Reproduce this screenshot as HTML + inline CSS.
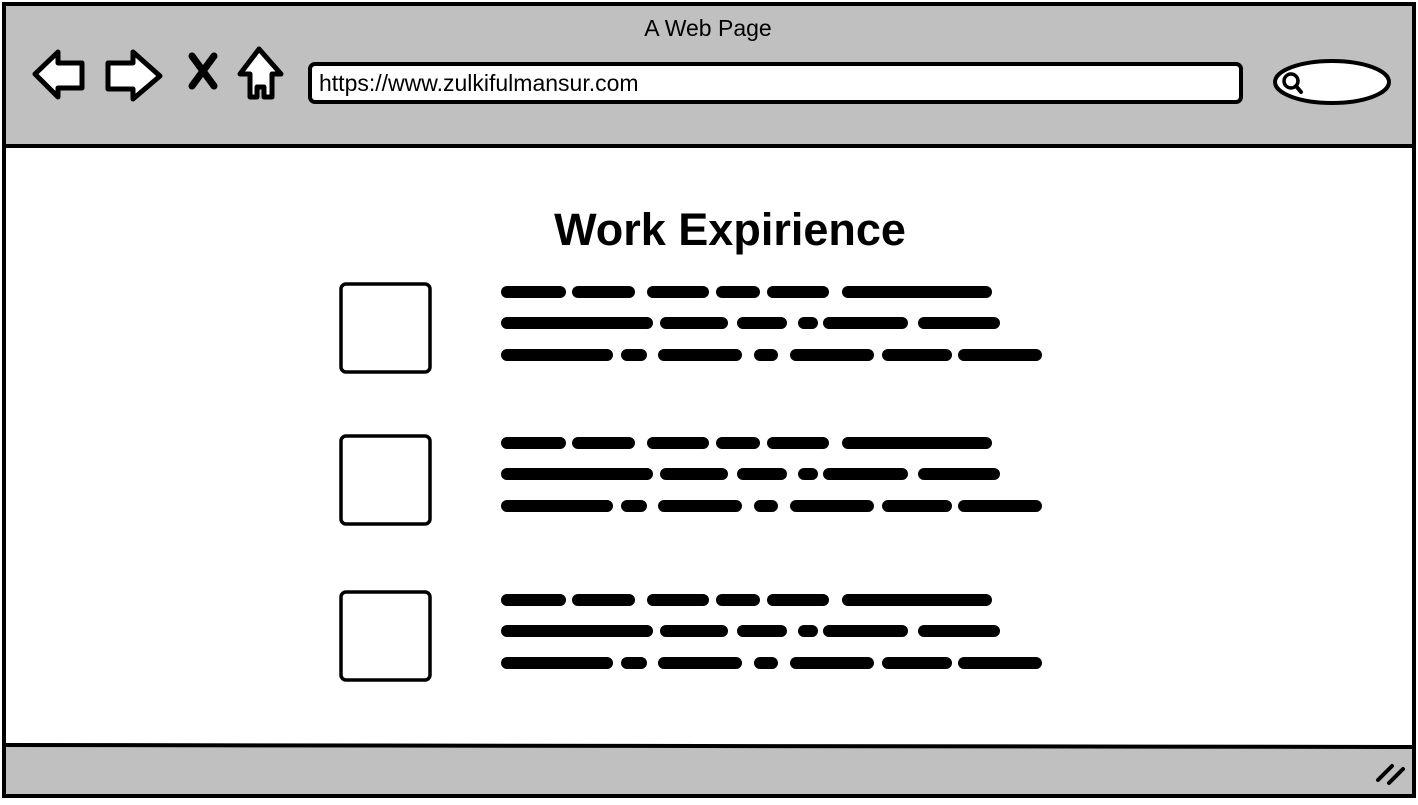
<!DOCTYPE html>
<html><head><style>
body{margin:0;width:1418px;height:800px;background:#fff;overflow:hidden;font-family:"Liberation Sans",sans-serif;}
</style></head><body>
<svg width="1418" height="800" xmlns="http://www.w3.org/2000/svg">
<defs>
<g id="scr" fill="#000">
<rect x="501" y="-6" width="65" height="12" rx="6"/><rect x="572" y="-6" width="63" height="12" rx="6"/><rect x="647" y="-6" width="62" height="12" rx="6"/><rect x="716" y="-6" width="44" height="12" rx="6"/><rect x="767" y="-6" width="62" height="12" rx="6"/><rect x="842" y="-6" width="150" height="12" rx="6"/>
<rect x="501" y="25" width="152" height="12" rx="6"/><rect x="660" y="25" width="68" height="12" rx="6"/><rect x="737" y="25" width="50" height="12" rx="6"/><rect x="798" y="25" width="20" height="12" rx="6"/><rect x="823" y="25" width="85" height="12" rx="6"/><rect x="918" y="25" width="82" height="12" rx="6"/>
<rect x="501" y="57" width="112" height="12" rx="6"/><rect x="621" y="57" width="26" height="12" rx="6"/><rect x="658" y="57" width="84" height="12" rx="6"/><rect x="754" y="57" width="24" height="12" rx="6"/><rect x="790" y="57" width="84" height="12" rx="6"/><rect x="882" y="57" width="70" height="12" rx="6"/><rect x="958" y="57" width="84" height="12" rx="6"/>
</g>
</defs>
<rect x="0" y="0" width="1418" height="800" fill="#fff"/>
<rect x="4" y="4" width="1410" height="142" fill="#c0c0c0"/>
<rect x="4" y="745" width="1410" height="50" fill="#c0c0c0"/>
<line x1="4" y1="146" x2="1414" y2="146" stroke="#000" stroke-width="4"/>
<line x1="4" y1="745" x2="1414" y2="747" stroke="#000" stroke-width="4"/>
<rect x="4" y="4" width="1410" height="792" fill="none" stroke="#000" stroke-width="4"/>
<text x="708" y="36" font-size="23" text-anchor="middle" fill="#000">A Web Page</text>
<path d="M35 74 L58 52 L58 63 L82 63 L82 88 L58 88 L58 97 Z" fill="#fff" stroke="#000" stroke-width="5" stroke-linejoin="round"/>
<path d="M108 63 L133 63 L133 52 L160 76 L133 99 L133 89 L108 89 Z" fill="#fff" stroke="#000" stroke-width="5" stroke-linejoin="round"/>
<path d="M192 56 L214 86 M214 56 L192 86" stroke="#000" stroke-width="7" stroke-linecap="round"/>
<path d="M259 49 L281 74 L272 74 L272 97 L264 97 L264 87 L257 87 L257 97 L250 97 L250 74 L240 74 Z" fill="#fff" stroke="#000" stroke-width="5" stroke-linejoin="round"/>
<rect x="310" y="64" width="931" height="38" rx="5" fill="#fff" stroke="#000" stroke-width="4"/>
<text x="319" y="91" font-size="23" fill="#000">https://www.zulkifulmansur.com</text>
<ellipse cx="1332" cy="82" rx="57" ry="21" fill="#fff" stroke="#000" stroke-width="4"/>
<circle cx="1291" cy="81" r="7" fill="none" stroke="#000" stroke-width="3.5"/>
<line x1="1296" y1="86" x2="1301" y2="92" stroke="#000" stroke-width="4" stroke-linecap="round"/>
<text x="730" y="245" font-size="45" font-weight="bold" text-anchor="middle" fill="#000">Work Expirience</text>
<rect x="341" y="284" width="89" height="88" rx="5" fill="#fff" stroke="#000" stroke-width="3.5"/>
<rect x="341" y="436" width="89" height="88" rx="5" fill="#fff" stroke="#000" stroke-width="3.5"/>
<rect x="341" y="592" width="89" height="88" rx="5" fill="#fff" stroke="#000" stroke-width="3.5"/>
<use href="#scr" transform="translate(0,292)"/>
<use href="#scr" transform="translate(0,443)"/>
<use href="#scr" transform="translate(0,600)"/>
<path d="M1378 780 L1392 766 M1389 783 L1403 769" stroke="#000" stroke-width="4" stroke-linecap="round"/>
</svg>
</body></html>
